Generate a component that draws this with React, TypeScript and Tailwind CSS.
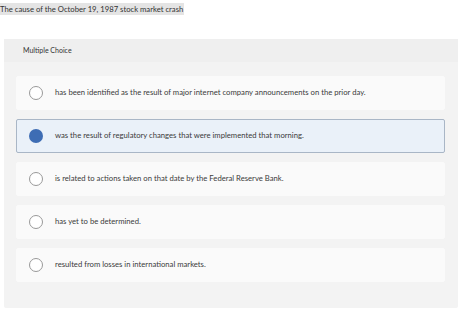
const options = [
  "has been identified as the result of major internet company announcements on the prior day.",
  "was the result of regulatory changes that were implemented that morning.",
  "is related to actions taken on that date by the Federal Reserve Bank.",
  "has yet to be determined.",
  "resulted from losses in international markets.",
];

const selected = 1;

export default function App() {
  return (
    <div className="w-[474px] h-[320px] bg-white font-['Lato',sans-serif] text-[#333]">
      <div className="pt-[3px] flex">
        <span className="bg-[#e4e4e4] text-[7.7px] leading-[12px] pr-[1px]">
          The cause of the October 19, 1987 stock market crash
        </span>
      </div>

      <div className="mt-[24px] ml-[4px] w-[454px] h-[269px] bg-[#f3f3f3] rounded-[2px]">
        <div className="h-[23px] bg-[#efefef] flex items-center pl-[19px] text-[7px] text-[#333]">
          Multiple Choice
        </div>

        <div className="flex flex-col gap-[9px] pl-[12px] pr-[13px] pt-[14px]">
          {options.map((text, i) => {
            const on = i === selected;
            return (
              <div
                key={i}
                className={
                  on
                    ? "h-[34px] flex items-center bg-[#eaf1f9] border border-[#a9b6c6] rounded-[2px]"
                    : "h-[34px] flex items-center bg-[#fafafa] border border-[#fafafa] rounded-[2px]"
                }
              >
                <div className="w-[38px] flex justify-center">
                  {on ? (
                    <div className="w-[14px] h-[14px] rounded-full bg-[#3e6db4]" />
                  ) : (
                    <div className="w-[14px] h-[14px] rounded-full border border-[#999] bg-white" />
                  )}
                </div>
                <span className="text-[7.7px] text-[#3a3a3a]">{text}</span>
              </div>
            );
          })}
        </div>
      </div>
    </div>
  );
}
